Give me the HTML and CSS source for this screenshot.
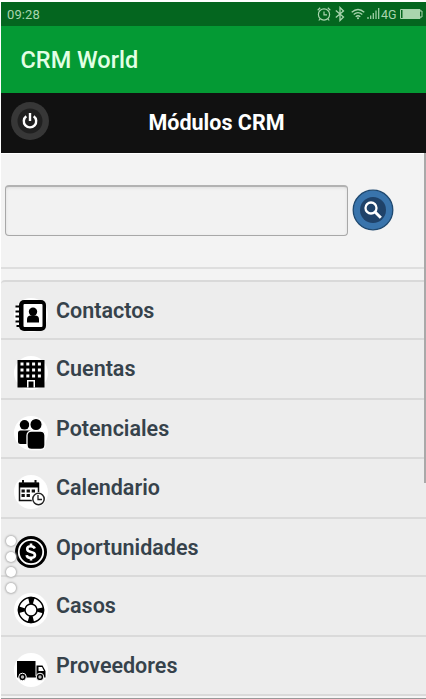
FILE: index.html
```html
<!DOCTYPE html>
<html lang="es">
<head>
<meta charset="utf-8">
<title>CRM World</title>
<link rel="stylesheet" href="styles.css">
</head>
<body>
<div class="screen">
  <div class="status">
    <span class="clock">09:28</span>
    <div class="indicators">
      <svg class="alarm" width="14" height="14" viewBox="0 0 14 14" fill="none" stroke="currentColor" stroke-width="1.2"><circle cx="7" cy="7.5" r="5.6"/><path d="M7 4.500v3.300h3M.7 3.200 3.200.8M13.300 3.200 10.800.8M3 12l-1.200 1.500M11 12l1.200 1.500"/></svg>
      <svg class="bluetooth" width="10" height="16" viewBox="0 0 10 16" fill="none" stroke="currentColor" stroke-width="1.300"><path d="M.8 4.500 8.500 11 5 14.500v-13L8.500 5 .8 11.500"/></svg>
      <svg class="wifi" width="14" height="12" viewBox="0 0 14 12" fill="none" stroke="currentColor" stroke-width="1.300"><path d="M.7 4.200Q7-1.300 13.300 4.200M2.700 6.500Q7 2.800 11.300 6.500M4.700 8.700Q7 6.700 9.300 8.700"/><circle cx="7" cy="10.300" r="1" fill="currentColor" stroke="none"/></svg>
      <svg class="signal" width="13" height="12" viewBox="0 0 13 12" stroke="currentColor" stroke-width="1.200"><path d="M1 11V9M3.700 11V7.500M6.300 11V5M9 11V2.500M11.700 11V0"/></svg>
      <span class="network">4G</span>
      <svg class="battery" width="23" height="12" viewBox="0 0 23 12"><path fill="none" stroke="currentColor" d="M.500 1.500h19.500v1.500h2v6h-2v1.500H.500z"/><path fill="currentColor" d="M2.500 2h17.500v8h-17.500z"/></svg>
    </div>
  </div>
  <header class="appbar">CRM World</header>
  <div class="titlebar">
    <div class="power"><svg width="38" height="38" viewBox="0 0 38 38" fill="none" stroke="#fff" stroke-width="2.400"><circle cx="19" cy="19" r="19" fill="#373737" stroke="none"/><circle cx="19" cy="19" r="12.500" fill="#202020" stroke="none"/><path d="M15.300 14.200a6.200 6.200 0 1 0 7.400 0M19 11v8"/></svg></div>
    <h1>Módulos CRM</h1>
  </div>
  <div class="search">
    <input class="field" type="text" aria-label="Buscar">
    <svg class="go" width="42" height="42" viewBox="0 0 42 42"><circle cx="21" cy="21" r="19.800" fill="#3974ac" stroke="#1f4970" stroke-width="1.300"/><circle cx="21" cy="21" r="13" fill="#1f4269"/><g fill="none" stroke="#fff" stroke-width="2.300"><circle cx="19" cy="19" r="5.500"/><path d="m22.800 22.800 6 6" stroke-width="3"/></g></svg>
  </div>
  <ul class="modules">
    <li><svg viewBox="0 0 36 36"><circle cx="18" cy="18" r="17" fill="#fff"/><rect x="6" y="3" width="27" height="31" rx="5"/><rect x="10.500" y="7" width="19" height="23" rx="1" fill="#fff"/><circle cx="20" cy="14.800" r="4.200"/><path d="M14 25.500v-3q0-4 4-4h4q4 0 4 4v3z"/><path d="M2.500 9.500h6M2.500 14.500h6M2.500 19.500h6M2.500 24.500h6M3.500 29h5" stroke="#000" stroke-width="2"/></svg><span>Contactos</span></li>
    <li><svg viewBox="0 0 36 36"><circle cx="18" cy="18" r="17" fill="#fff"/><path d="M4.500 5h27v27.500h-27z"/><path d="M7.500 9h3m2.800 0h3m2.800 0h3m2.800 0h3M7.500 15h3m2.800 0h3m2.800 0h3m2.800 0h3M7.500 21h3m2.800 0h3m2.800 0h3m2.800 0h3" stroke="#fff" stroke-width="3.200"/><path d="M14 32.500v-7.500h8v7.500z" fill="#fff"/><path d="M15.500 32.500v-6h5v6z"/></svg><span>Cuentas</span></li>
    <li><svg viewBox="0 0 36 36"><circle cx="18" cy="18" r="17" fill="#fff"/><circle cx="11.500" cy="9.800" r="4.800"/><rect x="5" y="15.500" width="14" height="13.500" rx="2.500"/><g stroke="#fff" stroke-width="1.300"><circle cx="23" cy="9.500" r="6.200"/><rect x="14" y="16" width="18" height="18.500" rx="4.500"/></g></svg><span>Potenciales</span></li>
    <li><svg viewBox="0 0 36 36"><circle cx="18" cy="18" r="17" fill="#fff"/><path d="M6.500 9.500h19v17h-19z" fill="none" stroke="#111" stroke-width="1.500"/><path d="M6 8.500h20v5H6z"/><path d="M10 6v4M22.500 6v4" stroke="#111" stroke-width="2"/><path d="M8.500 17h3.300m1.800 0h3.300m1.800 0h3.300M8.500 21.500h3.300m1.800 0h3.300" stroke="#111" stroke-width="2.800"/><circle cx="25.500" cy="25" r="7" fill="#fff"/><circle cx="25.500" cy="25" r="5.700" fill="#fff" stroke="#222" stroke-width="1.500"/><path d="M25 21v4.500h4" fill="none" stroke="#222" stroke-width="1.300"/></svg><span>Calendario</span></li>
    <li><svg viewBox="0 0 36 36"><circle cx="18" cy="18" r="16"/><circle cx="18" cy="18" r="12.200" fill="none" stroke="#fff" stroke-width="1.800"/><path d="M21.800 14.500q-1-2.300-3.800-2.300-3.800 0-3.800 2.700 0 2.200 3.800 3 4 .8 4 3.200 0 2.800-4 2.800t-4.300-2.800M18 9.500v3M18 23.500v3" fill="none" stroke="#fff" stroke-width="2.600"/></svg><span>Oportunidades</span></li>
    <li><svg viewBox="0 0 36 36"><circle cx="18" cy="18" r="17" fill="#fff"/><circle cx="18" cy="18" r="9.500" fill="none" stroke="#000" stroke-width="7.500" stroke-dasharray="5 9.923" stroke-dashoffset="2.500"/><circle cx="18" cy="18" r="12.500" fill="none" stroke="#000" stroke-width="1.500"/><circle cx="18" cy="18" r="6" fill="#fff" stroke="#000" stroke-width="1.500"/></svg><span>Casos</span></li>
    <li><svg viewBox="0 0 36 36"><circle cx="18" cy="18" r="17" fill="#fff"/><path d="M4 9h18.500v15H4zM23.500 13.500h6l3 5.500v5.500h-9zM4 24h28.500v1.500H4z"/><path d="M25.500 15h3.500l2 4h-5.500z" fill="#fff"/><g stroke="#fff" stroke-width="1"><circle cx="9.500" cy="25" r="3.800"/><circle cx="27" cy="25" r="3.800"/></g><g fill="#bbb"><circle cx="9.500" cy="25" r="1.700"/><circle cx="27" cy="25" r="1.700"/></g></svg><span>Proveedores</span></li>
  </ul>
  <div class="scrollbar"></div>
  <div class="dots"><i></i><i></i><i></i><i></i></div>
</div>
</body>
</html>
```
FILE: styles.css
```css
* { box-sizing: border-box; }
body { margin: 0; background: #fff; font-family: Roboto, "Liberation Sans", sans-serif; }
.screen { position: relative; width: 426px; height: 699px; padding: 2px 0 0 1px; overflow: hidden; display: flex; flex-direction: column; background: linear-gradient(#fff, #fff) 0 0 / 1px 100% no-repeat #f3f3f3; }
.status { height: 24px; flex: none; background: #04661f; color: #a9d5ae; display: flex; align-items: center; justify-content: space-between; padding: 0 3px 0 6px; box-shadow: 0 -2px #fff; }
.clock { font-size: 13px; letter-spacing: .1px; }
.indicators { display: flex; align-items: center; }
.bluetooth { margin-left: 4px; }
.wifi { margin-left: 6px; }
.signal { margin-left: 2px; }
.network { font-size: 12.5px; width: 16px; margin: 0 3px 0 1px; }
.appbar { height: 67px; flex: none; background: #049a34; color: #e2ffe5; font-size: 23.5px; font-weight: 500; line-height: 69px; padding-left: 19.5px; }
.titlebar { height: 60px; flex: none; background: #111; color: #fff; display: grid; grid-template-columns: 58px 1fr 52px; align-items: center; }
.power { padding-left: 9.5px; height: 42px; }
h1 { margin: 0; text-align: center; font-size: 21.5px; font-weight: 700; line-height: 58px; }
.search { height: 116px; flex: none; border-top: 1px solid #fff; border-bottom: 2px solid #dedede; padding: 31px 0 0 4px; display: flex; align-items: flex-start; }
.field { width: 343px; height: 51px; margin-right: 4px; background: #f2f2f2; border: 1px solid #a8a8a8; border-top: 2px solid #b2b2b2; border-radius: 4px; box-shadow: inset 0 1px 3px #ddd; }
.go { margin-top: 4px; }
.modules { list-style: none; margin: 11px 0 0; padding: 0; background: #ededed; border-top: 2px solid #d9d9d9; border-radius: 4px 0 0 0; height: 419px; flex: none; display: grid; grid-template-rows: 58px 60px 59px 60px 58px 60px 59px; align-content: start; }
.modules li { border-bottom: 2px solid #dadada; display: flex; padding: 0 0 0 12px; color: #36424b; }
.modules li svg { width: 36px; height: 36px; margin-top: 15px; flex: none; }
.modules span { margin-left: 7px; font-size: 21.5px; font-weight: 600; line-height: 58px; }
.modules li:last-child { box-shadow: 0 2px #f5f5f5, 0 4px #999; }
.scrollbar { position: absolute; right: 0; top: 153px; width: 2px; height: 330px; background: #a9a9a9; }
.dots { position: absolute; left: 6px; top: 536px; display: grid; gap: 5.500px; }
.dots i { width: 10px; height: 10px; border-radius: 50%; background: #fff; box-shadow: 0 0 2px 1px #b4b4b4; }
```
